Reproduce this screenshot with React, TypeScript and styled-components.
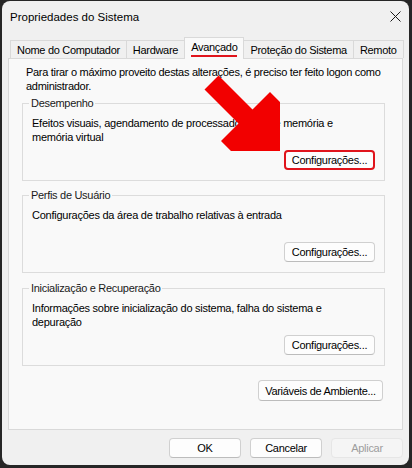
import styled, { createGlobalStyle } from "styled-components";

const GlobalStyle = createGlobalStyle`
  html, body {
    margin: 0;
    padding: 0;
    background: #262626;
  }
  body {
    font-family: "Liberation Sans", Arial, sans-serif;
    color: #000;
  }
  * {
    box-sizing: border-box;
  }
`;

const Screen = styled.div`
  position: relative;
  width: 412px;
  height: 468px;
  overflow: hidden;
  padding: 1px 0 0 2px;
`;

const Window = styled.div`
  width: 407px;
  height: 464px;
  background: #f0f0f0;
  border-radius: 8px;
  display: flex;
  flex-direction: column;
`;

const TitleBar = styled.div`
  height: 31px;
  display: flex;
  align-items: center;
  justify-content: space-between;
  padding: 0 8px 0 8px;
  font-size: 11.5px;
`;

const TabStrip = styled.div`
  margin: 5px 6px 0 6px;
  padding-left: 3px;
  height: 21px;
  display: flex;
  align-items: flex-end;
`;

const Tab = styled.div<{ $active?: boolean }>`
  height: ${(p) => (p.$active ? "22px" : "18px")};
  margin-left: -1px;
  margin-bottom: ${(p) => (p.$active ? "-1px" : "0")};
  padding: ${(p) => (p.$active ? "0 6px 1px" : "0 6px")};
  border: 1px solid #d9d9d9;
  border-bottom: none;
  background: ${(p) => (p.$active ? "#f9f9f9" : "#f0f0f0")};
  position: relative;
  z-index: ${(p) => (p.$active ? 1 : 0)};
  display: flex;
  align-items: center;
  font-size: 11px;
  letter-spacing: -0.3px;
  white-space: nowrap;
`;

const ActiveLabel = styled.span`
  border-bottom: 2px solid #e0141c;
  line-height: 15px;
  margin-top: 1px;
`;

const Panel = styled.div`
  margin: 0 6px;
  height: 372px;
  border: 1px solid #d9d9d9;
  background: #f9f9f9;
  padding: 6px 17px 0 13px;
  display: flex;
  flex-direction: column;
  font-size: 11px;
  letter-spacing: -0.3px;
`;

const Intro = styled.p`
  margin: 0 0 0 4px;
  line-height: 14px;
  white-space: nowrap;
`;

const Group = styled.fieldset<{ $gap: number }>`
  margin: ${(p) => p.$gap}px 0 0 0;
  padding: 0 9px 10px 9px;
  border: 1px solid #dcdcdc;
  min-width: 0;
`;

const Legend = styled.legend`
  padding: 0 2px;
  margin-left: -3px;
  line-height: 14px;
  color: #1a1a1a;
`;

const Description = styled.p`
  margin: 6px 0 0 0;
  line-height: 14px;
  min-height: 28px;
  letter-spacing: -0.25px;
`;

const ButtonRow = styled.div<{ $top: number }>`
  margin-top: ${(p) => p.$top}px;
  display: flex;
  justify-content: flex-end;
  gap: 9px;
`;

const Button = styled.button<{ $w: number; $highlight?: boolean; $h?: number }>`
  width: ${(p) => p.$w}px;
  height: ${(p) => p.$h ?? 20}px;
  padding: 0;
  font-family: inherit;
  font-size: 11px;
  letter-spacing: -0.3px;
  color: #000;
  background: #fdfdfd;
  border: ${(p) => (p.$highlight ? "2px solid #e0141c" : "1px solid #d0d0d0")};
  border-bottom-color: ${(p) => (p.$highlight ? "#e0141c" : "#bcbcbc")};
  border-radius: 4px;
  &:disabled {
    background: #f5f5f5;
    border-color: #e6e6e6;
    color: #9d9d9d;
  }
`;

const Footer = styled.div`
  margin-top: 8px;
  padding-right: 6px;
  display: flex;
  justify-content: flex-end;
  gap: 9px;
`;

const Overlay = styled.svg`
  position: absolute;
  left: 0;
  top: 0;
  pointer-events: none;
`;

function CloseIcon() {
  return (
    <svg width="11" height="11" viewBox="0 0 11 11">
      <path d="M0.5 0.5 L10.5 10.5 M10.5 0.5 L0.5 10.5" stroke="#1a1a1a" strokeWidth="1" fill="none" />
    </svg>
  );
}

export default function App() {
  return (
    <Screen>
      <GlobalStyle />
      <Window>
        <TitleBar>
          <span>Propriedades do Sistema</span>
          <CloseIcon />
        </TitleBar>
        <TabStrip>
          <Tab>Nome do Computador</Tab>
          <Tab>Hardware</Tab>
          <Tab $active>
            <ActiveLabel>Avançado</ActiveLabel>
          </Tab>
          <Tab>Proteção do Sistema</Tab>
          <Tab>Remoto</Tab>
        </TabStrip>
        <Panel>
          <Intro>
            Para tirar o máximo proveito destas alterações, é preciso ter feito logon como
            <br />
            administrador.
          </Intro>

          <Group $gap={3}>
            <Legend>Desempenho</Legend>
            <Description>
              Efeitos visuais, agendamento de processador, uso de memória e
              <br />
              memória virtual
            </Description>
            <ButtonRow $top={6}>
              <Button $w={91} $highlight>Configurações...</Button>
            </ButtonRow>
          </Group>

          <Group $gap={7}>
            <Legend>Perfis de Usuário</Legend>
            <Description>Configurações da área de trabalho relativas à entrada</Description>
            <ButtonRow $top={6}>
              <Button $w={91}>Configurações...</Button>
            </ButtonRow>
          </Group>

          <Group $gap={8}>
            <Legend>Inicialização e Recuperação</Legend>
            <Description>
              Informações sobre inicialização do sistema, falha do sistema e
              <br />
              depuração
            </Description>
            <ButtonRow $top={6}>
              <Button $w={91}>Configurações...</Button>
            </ButtonRow>
          </Group>

          <ButtonRow $top={14} style={{ marginRight: 2 }}>
            <Button $w={125} $h={21}>Variáveis de Ambiente...</Button>
          </ButtonRow>
        </Panel>
        <Footer>
          <Button $w={72}>OK</Button>
          <Button $w={72}>Cancelar</Button>
          <Button $w={72} disabled>Aplicar</Button>
        </Footer>
      </Window>

      <Overlay width="412" height="468" viewBox="0 0 412 468">
        <polygon
          points="218.5,75.5 252.5,109.5 270,92 280,102 280,151 231,151 221,141 238.5,123.5 204.5,89.5"
          fill="#f20000"
        />
      </Overlay>
    </Screen>
  );
}
